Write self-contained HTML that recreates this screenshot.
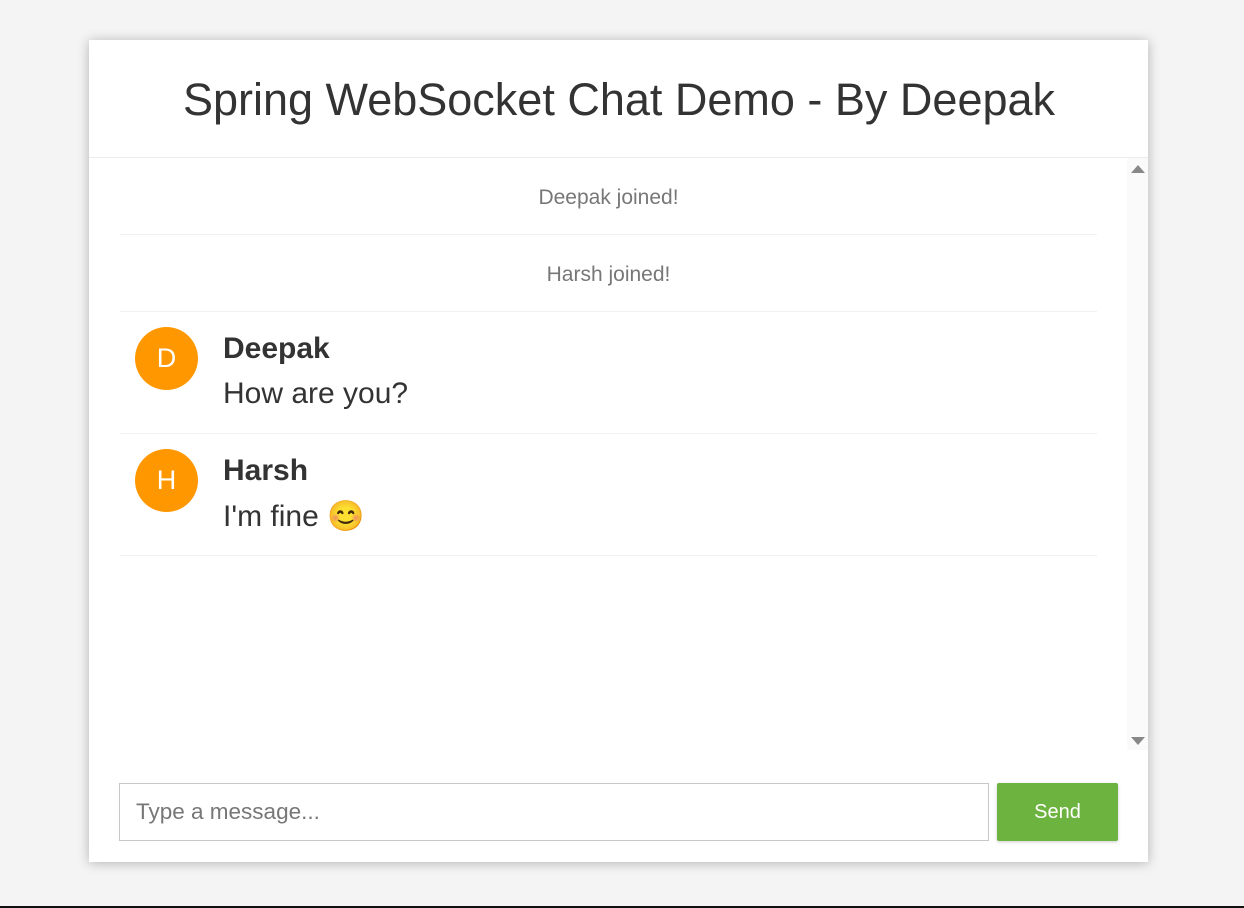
<!DOCTYPE html>
<html><head><meta charset="utf-8"><style>
html,body{margin:0;padding:0;width:1244px;height:908px;background:#f4f4f4;font-family:"Liberation Sans",Arial,sans-serif;overflow:hidden;position:relative}
.card{position:absolute;left:89px;top:40px;width:1059px;height:822px;background:#fff;box-shadow:0 1px 11px rgba(0,0,0,.27)}
.hdr{height:117px;border-bottom:1px solid #ececec;text-align:center}
.hdr h1{margin:0;font-weight:normal;font-size:45px;color:#333;line-height:119px;padding-left:1px;white-space:nowrap}
.area{position:absolute;left:0;top:118px;width:1059px;height:592px}
.sb{position:absolute;right:0;top:0;width:21px;height:592px;background:#fafafa}
.up{position:absolute;left:4px;top:7px;width:0;height:0;border-left:7px solid transparent;border-right:7px solid transparent;border-bottom:8px solid #888}
.dn{position:absolute;left:4px;bottom:5px;width:0;height:0;border-left:7px solid transparent;border-right:7px solid transparent;border-top:8px solid #888}
.list{position:absolute;left:31px;top:0;width:977px}
.ev{height:76px;line-height:80px;text-align:center;color:#777;font-size:21px;border-bottom:1px solid #f1f1f1}
.msg{position:relative;height:121px;border-bottom:1px solid #f1f1f1}
.av{position:absolute;left:15px;top:15px;width:63px;height:63px;border-radius:50%;background:#ff9800;color:#fff;font-size:27px;text-align:center;line-height:63px}
.nm{position:absolute;left:103px;top:20px;font-weight:bold;font-size:30px;color:#333}
.tx{position:absolute;left:103px;top:65px;font-size:30px;color:#333}
.inp{position:absolute;left:30px;top:743px;height:56px;border:1px solid #c8c8c8;font-size:22.5px;color:#777;line-height:56px;padding-left:16px;width:852px}
.btn{position:absolute;left:908px;top:743px;width:121px;height:58px;background:#6db33f;border-radius:2px;color:#fff;font-size:20px;text-align:center;line-height:58px;box-shadow:0 1px 3px rgba(0,0,0,.2)}
.bot{position:absolute;left:0;top:906px;width:1244px;height:2px;background:#111}
</style></head><body>
<div class="card">
<div class="hdr"><h1>Spring WebSocket Chat Demo - By Deepak</h1></div>
<div class="area">
<div class="list">
<div class="ev">Deepak joined!</div>
<div class="ev">Harsh joined!</div>
<div class="msg"><div class="av">D</div><div class="nm">Deepak</div><div class="tx">How are you?</div></div>
<div class="msg"><div class="av">H</div><div class="nm">Harsh</div><div class="tx">I'm fine 😊</div></div>
</div>
<div class="sb"><div class="up"></div><div class="dn"></div></div>
</div>
<div class="inp">Type a message...</div>
<div class="btn">Send</div>
</div>
<div class="bot"></div>
</body></html>
